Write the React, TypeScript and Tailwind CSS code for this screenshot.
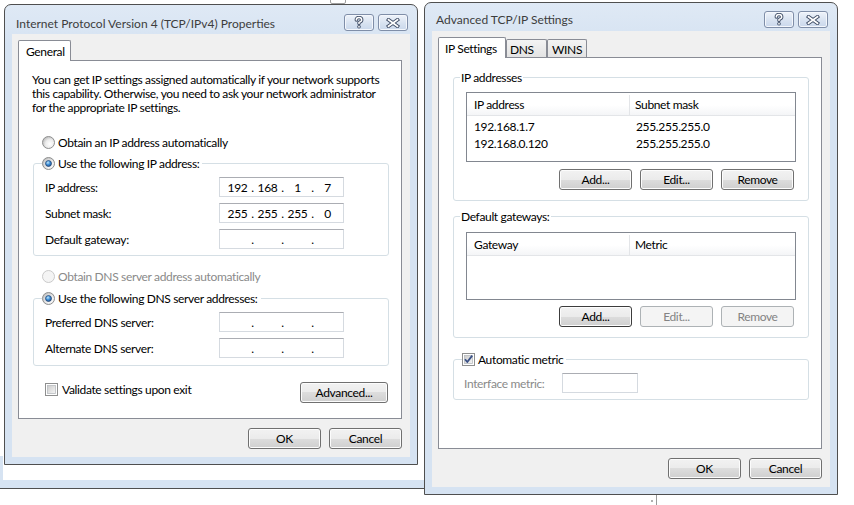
import React from "react";

const btnFace =
  "border-[#707070] bg-[linear-gradient(#f2f2f2_0%,#ebebeb_50%,#dddddd_50%,#cfcfcf_100%)] shadow-[inset_0_0_0_1px_#fcfcfc] text-black";

function Button({
  children,
  disabled,
  focused,
  w = "w-[73px]",
}: {
  children: React.ReactNode;
  disabled?: boolean;
  focused?: boolean;
  w?: string;
}) {
  const look = disabled
    ? "border-[#adb2b5] bg-[#f4f4f4] text-[#838383]"
    : focused
    ? `${btnFace} !border-[#3c3c3c]`
    : btnFace;
  return (
    <div className={`flex h-[21px] shrink-0 items-center justify-center rounded-[3px] border pt-px leading-[16px] ${w} ${look}`}>
      {children}
    </div>
  );
}

function Radio({ checked, disabled }: { checked?: boolean; disabled?: boolean }) {
  return (
    <svg width="13" height="13" viewBox="0 0 13 13" className="shrink-0">
      <defs>
        <radialGradient id="rOff" cx="0.62" cy="0.62" r="0.6">
          <stop offset="0" stopColor="#ffffff" />
          <stop offset="0.6" stopColor="#ececec" />
          <stop offset="1" stopColor="#c4c4c4" />
        </radialGradient>
        <radialGradient id="rDot" cx="0.4" cy="0.35" r="0.7">
          <stop offset="0" stopColor="#bfe6fb" />
          <stop offset="0.5" stopColor="#3d8ed6" />
          <stop offset="1" stopColor="#1b4d8c" />
        </radialGradient>
      </defs>
      <circle
        cx="6.5"
        cy="6.5"
        r="6"
        fill={disabled ? "#f4f4f4" : "url(#rOff)"}
        stroke={disabled ? "#c9c9c9" : "#8e8f8f"}
      />
      {checked && <circle cx="6.5" cy="6.5" r="3" fill="url(#rDot)" stroke="#23416b" strokeWidth="0.7" />}
    </svg>
  );
}

function Check({ checked }: { checked?: boolean }) {
  return (
    <svg width="13" height="13" viewBox="0 0 13 13" className="shrink-0">
      <defs>
        <linearGradient id="cIn" x1="0" y1="0" x2="1" y2="1">
          <stop offset="0" stopColor="#cbcbcb" />
          <stop offset="1" stopColor="#f6f6f6" />
        </linearGradient>
      </defs>
      <rect x="0.5" y="0.5" width="12" height="12" fill="#fff" stroke="#8e8f8f" />
      <rect x="2.5" y="2.5" width="8" height="8" fill="url(#cIn)" stroke="#b9bcc0" strokeWidth="0.8" />
      {checked && (
        <path d="M3 6.2 L5.3 9 L10.2 2.6" fill="none" stroke="#3a5186" strokeWidth="1.8" strokeLinejoin="round" />
      )}
    </svg>
  );
}

function CaptionButtons({ top }: { top: string }) {
  const face =
    "flex h-[17px] w-[30px] items-center justify-center rounded-[3px] border border-[#7f8ea8] bg-[linear-gradient(#eef3fa,#d6e1f0_60%,#cad8ec)] shadow-[inset_0_0_0_1px_#f4f7fc]";
  return (
    <div className={`mr-[2px] flex gap-[4px] ${top}`}>
      <div className={face}>
        <svg width="12" height="13" viewBox="0 0 12 13">
          <g fill="none" strokeLinecap="round" strokeLinejoin="round">
            <path d="M3.3 4 Q3.3 1.6 6 1.6 Q8.7 1.6 8.7 4 Q8.7 5.6 6 6.4 L6 7.6" stroke="#3f4d66" strokeWidth="3.4" />
            <path d="M6 10.7 L6 10.8" stroke="#3f4d66" strokeWidth="3.6" />
            <path d="M3.3 4 Q3.3 1.6 6 1.6 Q8.7 1.6 8.7 4 Q8.7 5.6 6 6.4 L6 7.6" stroke="#fff" strokeWidth="1.5" />
            <path d="M6 10.7 L6 10.8" stroke="#fff" strokeWidth="1.7" />
          </g>
        </svg>
      </div>
      <div className={face}>
        <svg width="14" height="10" viewBox="0 0 14 10">
          <g strokeLinecap="square">
            <path d="M2.5 1.8 L11.5 8.2 M11.5 1.8 L2.5 8.2" stroke="#3f4d66" strokeWidth="3.6" />
            <path d="M2.5 1.8 L11.5 8.2 M11.5 1.8 L2.5 8.2" stroke="#fff" strokeWidth="1.7" />
          </g>
        </svg>
      </div>
    </div>
  );
}

function Dialog({
  title,
  place,
  barH,
  titleTop,
  btnTop,
  tabs,
  panelH,
  children,
}: {
  title: string;
  place: string;
  barH: string;
  titleTop: string;
  btnTop: string;
  tabs: { label: string; w: string; pl: string }[];
  panelH: string;
  children: React.ReactNode;
}) {
  return (
    <div
      className={`absolute w-[414px] rounded-t-[7px] border border-[#4f4f4f] bg-[linear-gradient(#dfe9f5,#d6e3f2_40px,#d6e3f2)] px-[7px] pb-[7px] ${place}`}
    >
      <div className={`flex items-start justify-between ${barH}`}>
        <div className={`pl-[4px] leading-[16px] tracking-normal text-[#3d3d3d] ${titleTop}`}>{title}</div>
        <CaptionButtons top={btnTop} />
      </div>
      <div className="bg-[#f0f0f0] pb-[8px] pl-[6px] pr-[8px] pt-[6px]">
        <div className="flex h-[20px] items-end">
          {tabs.map((t, i) =>
            i === 0 ? (
              <div
                key={t.label}
                className={`relative z-10 -mb-px h-[21px] rounded-t-[2px] border border-b-0 border-[#898c95] bg-white pt-[3px] leading-[16px] ${t.w} ${t.pl}`}
              >
                {t.label}
              </div>
            ) : (
              <div
                key={t.label}
                className={`h-[18px] rounded-t-[2px] border border-b-0 border-[#898c95] bg-[linear-gradient(#f3f3f3,#e3e3e3)] pt-[2px] leading-[16px] ${t.w} ${t.pl}`}
              >
                {t.label}
              </div>
            )
          )}
        </div>
        <div className={`border border-[#898c95] bg-white ${panelH}`}>{children}</div>
        <div className="mt-[9px] flex justify-end gap-[8px]">
          <Button>OK</Button>
          <Button>Cancel</Button>
        </div>
      </div>
    </div>
  );
}

function IpBox({ segs }: { segs: string[] }) {
  return (
    <div className="flex h-[20px] w-[125px] items-center border border-[#d5dae0] border-t-[#abadb3] bg-white pl-[4px] pt-px">
      {segs.map((s, i) => (
        <React.Fragment key={i}>
          <span className="w-[27px] text-center leading-[16px]">{s}</span>
          {i < 3 && <span className="w-[3px] text-center leading-[16px]">.</span>}
        </React.Fragment>
      ))}
    </div>
  );
}

function IpRow({ label, segs }: { label: string; segs: string[] }) {
  return (
    <div className="flex h-[20px] items-center justify-between">
      <span className="pt-px leading-[16px]">{label}</span>
      <IpBox segs={segs} />
    </div>
  );
}

function ListView({ h, cols, rows }: { h: string; cols: string[]; rows: string[][] }) {
  return (
    <div className={`border border-[#828790] bg-white ${h}`}>
      <div className="flex h-[23px] border-b border-[#e3e5e8] bg-[linear-gradient(#ffffff,#ffffff_55%,#f4f5f7)] pt-[2px]">
        <div className="flex w-[163px] items-center border-r border-[#e3e5e8] pl-[7px]">{cols[0]}</div>
        <div className="flex flex-1 items-center pl-[5px]">{cols[1]}</div>
      </div>
      <div className="pt-[2px]">
        {rows.map((r) => (
          <div key={r[0]} className="flex h-[17px] items-center">
            <div className="w-[164px] pl-[7px]">{r[0]}</div>
            <div className="pl-[5px]">{r[1]}</div>
          </div>
        ))}
      </div>
    </div>
  );
}

const group = "rounded-[3px] border border-[#d5dfe5]";
const empty = ["", "", "", ""];

export default function App() {
  return (
    <div className="relative h-[505px] w-[854px] overflow-hidden bg-white font-['Segoe_UI',Lato,sans-serif] text-[12px] tracking-[-0.35px] text-black">
      {/* window behind both dialogs */}
      <div className="absolute left-[330px] top-[-8px] h-[12px] w-[16px] rounded-b-[2px] border border-[#a0a0a0]" />
      <div className="absolute left-0 top-[456px] h-[33px] w-[426px] border-b border-[#4f4f4f] bg-[#d6e3f2] pb-[8px] pl-[3px]">
        <div className="h-full bg-white" />
      </div>
      <div className="absolute left-[656px] top-[493px] h-[12px] w-px bg-[#9a9a9a]" />
      <div className="absolute left-[651px] top-[500px] h-[2px] w-[2px] bg-[#b0b0b0]" />

      <Dialog
        title="Internet Protocol Version 4 (TCP/IPv4) Properties"
        place="left-[4px] top-[4px]"
        barH="h-[29px]"
        titleTop="mt-[11px]"
        btnTop="mt-[9px]"
        tabs={[{ label: "General", w: "w-[53px]", pl: "pl-[7px]" }]}
        panelH="h-[359px]"
      >
        <div className="flex flex-col">
          <p className="ml-[13px] mt-[12px] whitespace-nowrap leading-[14px]">
            You can get IP settings assigned automatically if your network supports
            <br />
            this capability. Otherwise, you need to ask your network administrator
            <br />
            for the appropriate IP settings.
          </p>

          <div className="ml-[23px] mt-[19px] flex h-[16px] items-center gap-[3px]">
            <Radio />
            <span className="pt-px">Obtain an IP address automatically</span>
          </div>

          <fieldset className={`ml-[14px] mr-[12px] mt-[5px] ${group}`}>
            <legend className="ml-[8px] pr-[3px]">
              <span className="flex h-[16px] items-center gap-[3px]">
                <Radio checked />
                <span className="pt-px">Use the following IP address:</span>
              </span>
            </legend>
            <div className="flex flex-col gap-[6px] pb-[6px] pl-[11px] pr-[44px] pt-[6px]">
              <IpRow label="IP address:" segs={["192", "168", "1", "7"]} />
              <IpRow label="Subnet mask:" segs={["255", "255", "255", "0"]} />
              <IpRow label="Default gateway:" segs={empty} />
            </div>
          </fieldset>

          <div className="ml-[23px] mt-[12px] flex h-[16px] items-center gap-[3px] text-[#8a8a8a]">
            <Radio disabled />
            <span className="pt-px">Obtain DNS server address automatically</span>
          </div>

          <fieldset className={`ml-[14px] mr-[12px] mt-[6px] ${group}`}>
            <legend className="ml-[8px] pr-[3px]">
              <span className="flex h-[16px] items-center gap-[3px]">
                <Radio checked />
                <span className="pt-px">Use the following DNS server addresses:</span>
              </span>
            </legend>
            <div className="flex flex-col gap-[6px] pb-[7px] pl-[11px] pr-[44px] pt-[6px]">
              <IpRow label="Preferred DNS server:" segs={empty} />
              <IpRow label="Alternate DNS server:" segs={empty} />
            </div>
          </fieldset>

          <div className="ml-[26px] mr-[13px] mt-[17px] flex items-start justify-between">
            <div className="flex h-[13px] items-center gap-[4px]">
              <Check />
              <span className="pt-px leading-[16px]">Validate settings upon exit</span>
            </div>
            <div className="-mt-px">
              <Button w="w-[88px]">Advanced...</Button>
            </div>
          </div>
        </div>
      </Dialog>

      <Dialog
        title="Advanced TCP/IP Settings"
        place="left-[424px] top-[2px]"
        barH="h-[28px]"
        titleTop="mt-[9px]"
        btnTop="mt-[8px]"
        tabs={[
          { label: "IP Settings", w: "w-[68px]", pl: "pl-[6px]" },
          { label: "DNS", w: "w-[41px]", pl: "pl-[3px]" },
          { label: "WINS", w: "w-[40px]", pl: "pl-[4px]" },
        ]}
        panelH="h-[392px]"
      >
        <div className="flex flex-col">
          <fieldset className={`ml-[14px] mr-[12px] mt-[11px] ${group}`}>
            <legend className="ml-[6px] px-[1px] pt-px leading-[16px]">IP addresses</legend>
            <div className="pl-[12px] pr-[12px] pt-[6px]">
              <ListView
                h="h-[70px]"
                cols={["IP address", "Subnet mask"]}
                rows={[
                  ["192.168.1.7", "255.255.255.0"],
                  ["192.168.0.120", "255.255.255.0"],
                ]}
              />
            </div>
            <div className="mt-[7px] flex justify-end gap-[8px] pb-[10px] pr-[14px]">
              <Button>Add...</Button>
              <Button>Edit...</Button>
              <Button>Remove</Button>
            </div>
          </fieldset>

          <fieldset className={`ml-[14px] mr-[12px] mt-[7px] ${group}`}>
            <legend className="ml-[6px] px-[1px] pt-px leading-[16px]">Default gateways:</legend>
            <div className="pl-[12px] pr-[12px] pt-[7px]">
              <ListView h="h-[68px]" cols={["Gateway", "Metric"]} rows={[]} />
            </div>
            <div className="mt-[6px] flex justify-end gap-[8px] pb-[10px] pr-[14px]">
              <Button focused>Add...</Button>
              <Button disabled>Edit...</Button>
              <Button disabled>Remove</Button>
            </div>
          </fieldset>

          <fieldset className={`ml-[14px] mr-[12px] mt-[13px] ${group}`}>
            <legend className="ml-[8px] pr-[3px]">
              <span className="flex h-[16px] items-center gap-[3px]">
                <Check checked />
                <span className="pt-px">Automatic metric</span>
              </span>
            </legend>
            <div className="flex items-center pb-[6px] pl-[10px] pt-[6px]">
              <span className="w-[98px] pt-px text-[#8a8a8a]">Interface metric:</span>
              <div className="h-[20px] w-[76px] border border-[#d5dae0] border-t-[#abadb3] bg-white" />
            </div>
          </fieldset>
        </div>
      </Dialog>
    </div>
  );
}
